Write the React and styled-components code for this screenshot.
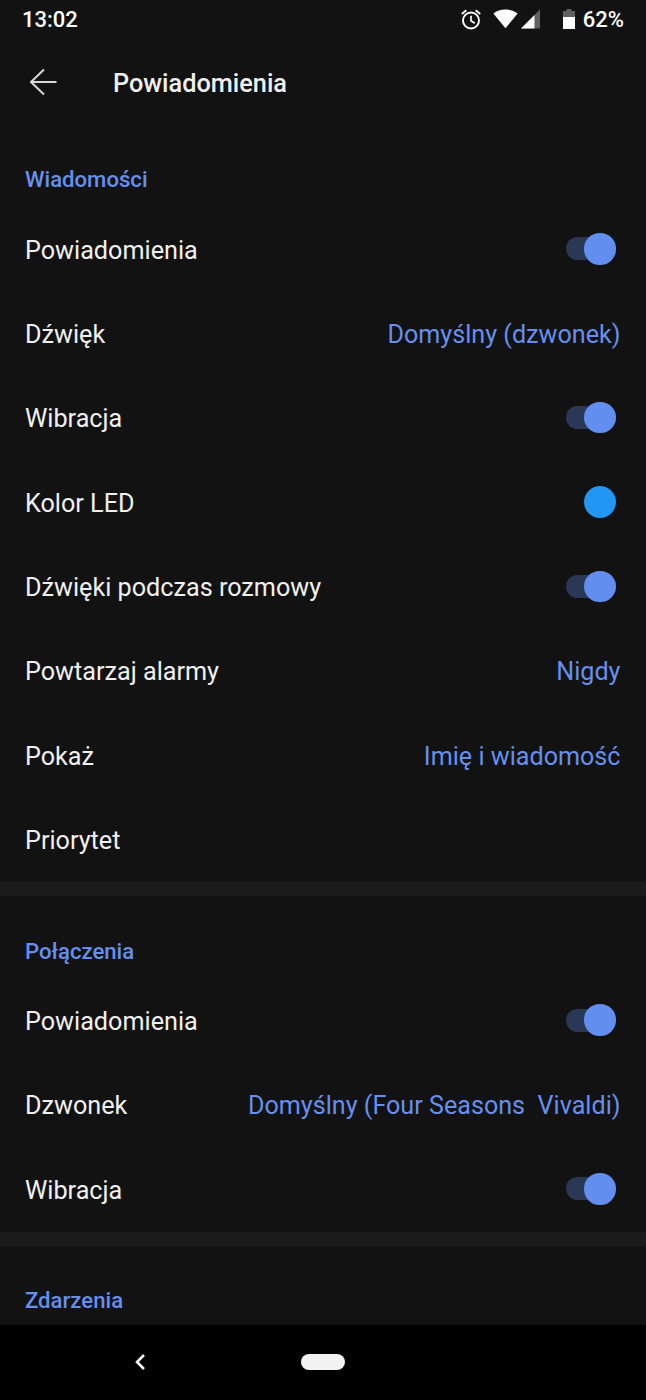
import { useState } from 'react';
import styled, { createGlobalStyle } from 'styled-components';

const sections = [
  {
    title: 'Wiadomości',
    rows: [
      { label: 'Powiadomienia', type: 'switch' },
      { label: 'Dźwięk', value: 'Domyślny (dzwonek)' },
      { label: 'Wibracja', type: 'switch' },
      { label: 'Kolor LED', type: 'color', color: '#2196f3' },
      { label: 'Dźwięki podczas rozmowy', type: 'switch' },
      { label: 'Powtarzaj alarmy', value: 'Nigdy' },
      { label: 'Pokaż', value: 'Imię i wiadomość' },
      { label: 'Priorytet' }
    ]
  },
  {
    title: 'Połączenia',
    rows: [
      { label: 'Powiadomienia', type: 'switch' },
      { label: 'Dzwonek', value: 'Domyślny (Four Seasons  Vivaldi)' },
      { label: 'Wibracja', type: 'switch' }
    ]
  },
  { title: 'Zdarzenia', rows: [] }
];

const GlobalStyle = createGlobalStyle`
  * {
    box-sizing: border-box;
  }

  body {
    margin: 0;
    background-color: #121212;
    font-family: Roboto, sans-serif;
  }
`;

const Screen = styled.div`
  display: flex;
  flex-direction: column;
  width: 646px;
  height: 1400px;
  overflow: hidden;
  color: #f0f0f0;
  background-color: #121212;
`;

const StatusBar = styled.div`
  flex: none;
  display: flex;
  align-items: center;
  justify-content: space-between;
  height: 40px;
  padding: 0 22px 1px;
  color: #fff;
  font-size: 22px;
  font-weight: 500;
`;

const StatusIcons = styled.div`
  display: flex;
  align-items: center;

  svg {
    display: block;
  }
`;

const IconSlot = styled.span`
  margin: 0 ${({ $gap }) => $gap}px 1px 0;
`;

const Header = styled.header`
  flex: none;
  display: flex;
  align-items: center;
  height: 85px;
  padding: 0 29px;
`;

const BackButton = styled.button`
  width: 84px;
  height: 28px;
  margin-bottom: 2px;
  padding: 0;
  border: none;
  background: none;
  text-align: left;

  svg {
    display: block;
  }
`;

const Title = styled.h1`
  margin: 0;
  padding-top: 1px;
  font-size: 25.3px;
  font-weight: 500;
`;

const Content = styled.main`
  flex: 1;
  min-height: 0;
  overflow: hidden;
`;

const Section = styled.section`
  & + & {
    border-top: 14px solid #1b1b1b;
  }
`;

const SectionTitle = styled.h2`
  height: 82.4px;
  margin: 0;
  padding: 39.4px 25px 0;
  color: #6690ef;
  font-size: 22.15px;
  font-weight: 500;
  line-height: 30px;
`;

const Row = styled.div`
  display: flex;
  align-items: center;
  justify-content: space-between;
  height: 84.37px;
  padding: 0 25px;
  font-size: 25.2px;
`;

const Label = styled.span`
  padding-top: 1.2px;
`;

const Value = styled.span`
  padding: 1.2px 0.5px 0 0;
  color: #6690ef;
  font-size: 25.15px;
  white-space: pre;
`;

const SwitchTrack = styled.button`
  display: flex;
  align-items: center;
  justify-content: ${({ $on }) => ($on ? 'flex-end' : 'flex-start')};
  width: 49.5px;
  height: 23px;
  margin: 0 5.5px 1.5px 0;
  padding: 0;
  border: none;
  border-radius: 12px;
  background-color: ${({ $on }) => ($on ? '#2b3855' : '#444')};
`;

const SwitchThumb = styled.span`
  flex: none;
  width: 31.5px;
  height: 31.5px;
  border-radius: 50%;
  background-color: ${({ $on }) => ($on ? '#628eef' : '#bbb')};
`;

const ColorDot = styled.span`
  width: 32px;
  height: 32px;
  margin: 0 5px 2px 0;
  border-radius: 50%;
  background-color: ${({ $color }) => $color};
`;

const NavBar = styled.nav`
  flex: none;
  display: grid;
  grid-template-columns: 280px 86px 280px;
  align-items: center;
  justify-items: center;
  height: 75px;
  padding-bottom: 1px;
  background-color: #000;
`;

const HomePill = styled.span`
  width: 44px;
  height: 16px;
  border-radius: 8px;
  background-color: #f2f2f2;
`;

function AlarmIcon() {
  return (
    <svg width="20" height="21" viewBox="0 0 20 21" fill="none" stroke="#fff" strokeWidth="1.9">
      <circle cx="10" cy="11.5" r="8" />
      <path d="M10 6.8v5l3.7 2.5" strokeWidth="1.7" />
      <path d="M.8 5 5.3 1.2M19.2 5l-4.5-3.8" />
    </svg>
  );
}

function WifiIcon() {
  return (
    <svg width="25" height="20" viewBox="0 0 25 20" fill="#fff">
      <path d="M12.5 19.3.4 4.5C3.5 2 7.7.5 12.5.5s9 1.5 12.1 4z" />
    </svg>
  );
}

function SignalIcon() {
  return (
    <svg width="19" height="20" viewBox="0 0 19 20">
      <path d="M19 .5v19H0z" fill="#606060" />
      <path d="M13.5 6v13.5H0z" fill="#fff" />
    </svg>
  );
}

function BatteryIcon() {
  return (
    <svg width="12" height="20" viewBox="0 0 12 20">
      <path d="M3.5 0h5v2H12v6H0V2h3.5z" fill="#606060" />
      <path d="M0 8h12v12H0z" fill="#fff" />
    </svg>
  );
}

function Switch() {
  const [on, setOn] = useState(true);

  return (
    <SwitchTrack $on={on} onClick={() => setOn(!on)}>
      <SwitchThumb $on={on} />
    </SwitchTrack>
  );
}

function SettingRow({ label, value, type, color }) {
  return (
    <Row>
      <Label>{label}</Label>
      {type === 'switch' && <Switch />}
      {type === 'color' && <ColorDot $color={color} />}
      {value && <Value>{value}</Value>}
    </Row>
  );
}

function App() {
  return (
    <Screen>
      <GlobalStyle />
      <StatusBar>
        <span>13:02</span>
        <StatusIcons>
          <IconSlot $gap={12}>
            <AlarmIcon />
          </IconSlot>
          <IconSlot $gap={3}>
            <WifiIcon />
          </IconSlot>
          <IconSlot $gap={23}>
            <SignalIcon />
          </IconSlot>
          <IconSlot $gap={8}>
            <BatteryIcon />
          </IconSlot>
          <span>62%</span>
        </StatusIcons>
      </StatusBar>
      <Header>
        <BackButton>
          <svg width="28" height="28" viewBox="0 0 28 28" fill="none" stroke="#d8d8d8" strokeWidth="2">
            <path d="M27.5 14H2M15 1.5 2 14l13 12.5" />
          </svg>
        </BackButton>
        <Title>Powiadomienia</Title>
      </Header>
      <Content>
        {sections.map(({ title, rows }) => (
          <Section key={title}>
            <SectionTitle>{title}</SectionTitle>
            {rows.map((row) => (
              <SettingRow key={row.label} {...row} />
            ))}
          </Section>
        ))}
      </Content>
      <NavBar>
        <svg width="10" height="16" viewBox="0 0 10 16" fill="none" stroke="#fff" strokeWidth="2.5">
          <path d="M9 1 2 8l7 7" />
        </svg>
        <HomePill />
      </NavBar>
    </Screen>
  );
}

export default App;
